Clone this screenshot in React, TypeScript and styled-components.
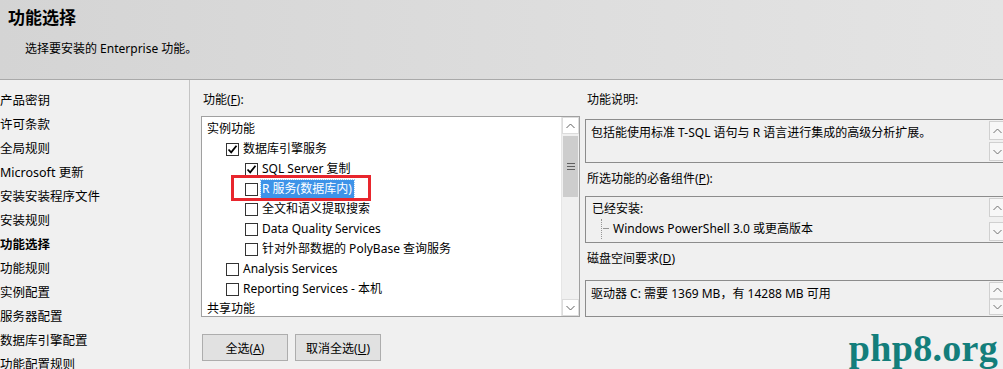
import styled, { createGlobalStyle } from "styled-components";

const GlobalStyle = createGlobalStyle`
  html, body {
    margin: 0;
    padding: 0;
    width: 1003px;
    height: 369px;
    overflow: hidden;
    background: #f0f0f0;
  }
  body {
    font-family: "Noto Sans", "Noto Sans CJK SC", sans-serif;
    font-size: 12px;
    color: #000;
  }
`;

const Page = styled.div`
  position: relative;
  width: 1003px;
  height: 369px;
  overflow: hidden;
`;

const Header = styled.div`
  height: 80px;
  box-sizing: border-box;
  border-bottom: 1px solid #a9a9a9;
  background: linear-gradient(to right, #d4d4d4, #dedede 60%, #e4e4e4);
  padding: 4px 0 0 8px;
`;

const Title = styled.h1`
  margin: 0;
  font: bold 17px/26px "Noto Sans CJK SC", sans-serif;
`;

const Subtitle = styled.p`
  margin: 10px 0 0 17px;
  line-height: 18px;
`;

const Main = styled.div`
  display: flex;
  height: 289px;
`;

const Nav = styled.ul`
  width: 189px;
  flex-shrink: 0;
  margin: 0;
  padding: 9px 0 0 0;
  list-style: none;
  border-right: 1px solid #c4c4c4;
`;

const NavItem = styled.li<{ $active?: boolean }>`
  height: 24px;
  line-height: 24px;
  font-size: 12.5px;
  font-weight: ${(p) => (p.$active ? "bold" : "normal")};
  white-space: nowrap;
`;

const Content = styled.div`
  display: flex;
  gap: 5px;
  padding: 8px 0 0 11px;
`;

const LeftCol = styled.div`
  width: 379px;
  flex-shrink: 0;
  display: flex;
  flex-direction: column;
`;

const RightCol = styled.div`
  width: 422px;
  flex-shrink: 0;
  display: flex;
  flex-direction: column;
`;

const Label = styled.div<{ $gap: number; $top?: number }>`
  height: 18px;
  line-height: 20px;
  padding: 2px 0 0 2px;
  margin-top: ${(p) => p.$top ?? 0}px;
  margin-bottom: ${(p) => p.$gap}px;
  white-space: nowrap;
`;

const Key = styled.span`
  text-decoration: underline;
`;

const ListBox = styled.div`
  position: relative;
  height: 201px;
  box-sizing: border-box;
  border: 1px solid #a0a0a0;
  background: #fff;
  display: flex;
`;

const Rows = styled.div`
  flex: 1;
  overflow: hidden;
  padding-top: 2px;
`;

const Row = styled.div<{ $level: number }>`
  height: 20px;
  display: flex;
  align-items: center;
  gap: 4px;
  padding-left: ${(p) => 5 + p.$level * 19}px;
  white-space: nowrap;
`;

const Check = styled.span`
  width: 13px;
  height: 13px;
  box-sizing: border-box;
  border: 1px solid #333;
  background: #fff;
  display: flex;
  align-items: center;
  justify-content: center;
  flex-shrink: 0;
`;

const ItemText = styled.span<{ $selected?: boolean }>`
  line-height: 18px;
  padding: 0 2px 0 1px;
  margin-left: -1px;
  background: ${(p) => (p.$selected ? "#3d93e8" : "transparent")};
  color: ${(p) => (p.$selected ? "#fff" : "#000")};
  outline: ${(p) => (p.$selected ? "1px dotted #9ccaf5" : "none")};
`;

const ScrollBar = styled.div`
  width: 17px;
  flex-shrink: 0;
  display: flex;
  flex-direction: column;
  background: #f0f0f0;
  border-left: 1px solid #e6e6e6;
`;

const ScrollBtn = styled.div`
  height: 17px;
  display: flex;
  align-items: center;
  justify-content: center;
  background: #fff;
  border: 1px solid #dcdcdc;
  box-sizing: border-box;
`;

const Thumb = styled.div`
  height: 61px;
  margin: 2px 1px 0;
  background: #cdcdcd;
  display: flex;
  align-items: center;
  justify-content: center;
`;

const Track = styled.div`
  flex: 1;
`;

const Callout = styled.div`
  position: absolute;
  left: 29px;
  top: 58px;
  width: 140px;
  height: 26px;
  box-sizing: border-box;
  border: 3px solid #e8262d;
`;

const Buttons = styled.div`
  display: flex;
  gap: 7px;
  margin-top: 17px;
  padding-left: 1px;
`;

const Button = styled.button`
  width: 86px;
  height: 27px;
  padding: 1px 0 0;
  border: 1px solid #adadad;
  background: #e1e1e1;
  font: 12px "Noto Sans", "Noto Sans CJK SC", sans-serif;
  color: #000;
`;

const InfoBox = styled.div<{ $h: number }>`
  height: ${(p) => p.$h}px;
  box-sizing: border-box;
  border: 1px solid #8c8c8c;
  background: #f0f0f0;
  display: flex;
`;

const InfoText = styled.div<{ $pad?: string }>`
  flex: 1;
  padding: ${(p) => p.$pad ?? "3px 5px 0"};
  line-height: 20px;
  white-space: nowrap;
`;

const MiniScroll = styled.div`
  width: 17px;
  flex-shrink: 0;
  display: flex;
  flex-direction: column;
  justify-content: space-between;
  padding: 1px 0;
`;

const MiniBtn = styled.div`
  height: 19px;
  box-sizing: border-box;
  border: 1px solid #d0d0d0;
  background: #f7f7f7;
  display: flex;
  align-items: center;
  justify-content: center;
`;

const TreeLine = styled.div`
  display: flex;
  align-items: center;
  height: 20px;
  padding-left: 9px;
`;

const Dots = styled.span`
  width: 8px;
  height: 20px;
  margin-right: 4px;
  box-sizing: border-box;
  border-left: 1px dotted #808080;
  background: linear-gradient(#808080, #808080) no-repeat left 1px top 9px / 7px 1px;
  opacity: 0.8;
`;

const Watermark = styled.div`
  position: absolute;
  right: 5px;
  bottom: 1px;
  font: bold 38px/40px "Liberation Serif", serif;
  color: #137e7b;
  letter-spacing: 0.3px;
`;

const Tick = () => (
  <svg width="11" height="11" viewBox="0 0 11 11">
    <path d="M1.5 5.5 L4.2 8.3 L9.5 1.8" fill="none" stroke="#000" strokeWidth="1.8" />
  </svg>
);

const Chevron = ({ up, color = "#606060" }: { up?: boolean; color?: string }) => (
  <svg width="9" height="6" viewBox="0 0 9 6">
    <path d={up ? "M0.5 5 L4.5 1 L8.5 5" : "M0.5 1 L4.5 5 L8.5 1"} fill="none" stroke={color} strokeWidth="1" />
  </svg>
);

const Grip = () => (
  <svg width="8" height="7" viewBox="0 0 8 7">
    <path d="M0 0.5 H8 M0 3.5 H8 M0 6.5 H8" stroke="#606060" strokeWidth="1" />
  </svg>
);

type Item = { level: number; text: string; check?: boolean; checked?: boolean; selected?: boolean };

const items: Item[] = [
  { level: 0, text: "实例功能" },
  { level: 1, text: "数据库引擎服务", check: true, checked: true },
  { level: 2, text: "SQL Server 复制", check: true, checked: true },
  { level: 2, text: "R 服务(数据库内)", check: true, selected: true },
  { level: 2, text: "全文和语义提取搜索", check: true },
  { level: 2, text: "Data Quality Services", check: true },
  { level: 2, text: "针对外部数据的 PolyBase 查询服务", check: true },
  { level: 1, text: "Analysis Services", check: true },
  { level: 1, text: "Reporting Services - 本机", check: true },
  { level: 0, text: "共享功能" },
];

const steps = [
  "产品密钥",
  "许可条款",
  "全局规则",
  "Microsoft 更新",
  "安装安装程序文件",
  "安装规则",
  "功能选择",
  "功能规则",
  "实例配置",
  "服务器配置",
  "数据库引擎配置",
  "功能配置规则",
];

function MiniScrollBar() {
  return (
    <MiniScroll>
      <MiniBtn>
        <Chevron up color="#707070" />
      </MiniBtn>
      <MiniBtn>
        <Chevron color="#707070" />
      </MiniBtn>
    </MiniScroll>
  );
}

export default function App() {
  return (
    <Page>
      <GlobalStyle />
      <Header>
        <Title>功能选择</Title>
        <Subtitle>选择要安装的 Enterprise 功能。</Subtitle>
      </Header>
      <Main>
        <Nav>
          {steps.map((s) => (
            <NavItem key={s} $active={s === "功能选择"}>
              {s}
            </NavItem>
          ))}
        </Nav>
        <Content>
          <LeftCol>
            <Label $gap={8}>
              功能(<Key>F</Key>):
            </Label>
            <ListBox>
              <Rows>
                {items.map((it) => (
                  <Row key={it.text} $level={it.level}>
                    {it.check && <Check>{it.checked && <Tick />}</Check>}
                    <ItemText $selected={it.selected}>{it.text}</ItemText>
                  </Row>
                ))}
              </Rows>
              <ScrollBar>
                <ScrollBtn>
                  <Chevron up />
                </ScrollBtn>
                <Thumb>
                  <Grip />
                </Thumb>
                <Track />
                <ScrollBtn>
                  <Chevron />
                </ScrollBtn>
              </ScrollBar>
              <Callout />
            </ListBox>
            <Buttons>
              <Button>
                全选(<Key>A</Key>)
              </Button>
              <Button>
                取消全选(<Key>U</Key>)
              </Button>
            </Buttons>
          </LeftCol>
          <RightCol>
            <Label $gap={11}>功能说明:</Label>
            <InfoBox $h={44}>
              <InfoText>包括能使用标准 T-SQL 语句与 R 语言进行集成的高级分析扩展。</InfoText>
              <MiniScrollBar />
            </InfoBox>
            <Label $gap={9} $top={4}>
              所选功能的必备组件(<Key>P</Key>):
            </Label>
            <InfoBox $h={47}>
              <InfoText $pad="2px 0 0 6px">
                <div>已经安装:</div>
                <TreeLine>
                  <Dots />
                  Windows PowerShell 3.0 或更高版本
                </TreeLine>
              </InfoText>
              <MiniScrollBar />
            </InfoBox>
            <Label $gap={13} $top={4}>
              磁盘空间要求(<Key>D</Key>)
            </Label>
            <InfoBox $h={37}>
              <InfoText>驱动器 C: 需要 1369 MB，有 14288 MB 可用</InfoText>
              <MiniScrollBar />
            </InfoBox>
          </RightCol>
        </Content>
      </Main>
      <Watermark>php8.org</Watermark>
    </Page>
  );
}
